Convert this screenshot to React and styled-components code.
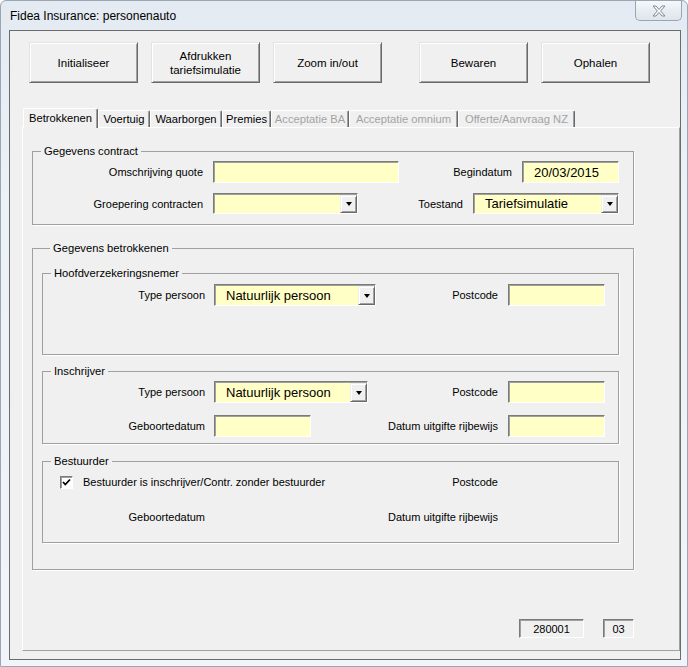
import React from "react";
import styled, { createGlobalStyle } from "styled-components";

const GlobalStyle = createGlobalStyle`
  html, body { margin: 0; padding: 0; background: #fff; }
  body {
    font-family: "Liberation Sans", Arial, sans-serif;
    font-size: 11px;
    color: #000;
  }
  * { box-sizing: border-box; }
`;

const Window = styled.div`
  width: 688px;
  height: 667px;
  display: flex;
  flex-direction: column;
  background: linear-gradient(180deg, #e3eaf2 0%, #edf2f7 30%, #f1f4f8 100%);
  border: 1px solid #9ba6b2;
  border-radius: 6px 6px 0 0;
  overflow: hidden;
`;

const TitleBar = styled.div`
  height: 29px;
  display: flex;
  align-items: flex-start;
  padding-left: 9px;
`;

const Title = styled.span`
  margin-top: 8px;
  font-size: 12px;
  color: #000;
`;

const CloseButton = styled.div`
  margin-left: auto;
  margin-right: 5px;
  width: 47px;
  height: 20px;
  border: 1px solid #9aa5b1;
  border-top: none;
  border-radius: 0 0 5px 5px;
  background: linear-gradient(180deg, #f7f9fb 0%, #e8edf2 50%, #dfe5ec 100%);
  display: flex;
  align-items: center;
  justify-content: center;
`;

const Client = styled.div`
  flex: 1;
  margin: 0 6px 6px 8px;
  border: 1px solid #6b6b6b;
  background: #f0f0f0;
  display: flex;
  flex-direction: column;
  padding: 11px 0 8px 0;
`;

const ButtonRow = styled.div`
  display: flex;
  padding-left: 19px;
`;

const Button = styled.button`
  width: 109px;
  height: 41px;
  margin-left: ${(p) => p.$gap || 0}px;
  padding: 0;
  background: #f0f0f0;
  border: 1px solid;
  border-color: #e3e3e3 #696969 #696969 #e3e3e3;
  box-shadow: inset 1px 1px #fff, inset -1px -1px #a0a0a0;
  font-family: inherit;
  font-size: 11.5px;
  line-height: 14px;
  color: #000;
`;

const TabStrip = styled.div`
  margin-top: 25px;
  height: 20px;
  margin-bottom: -1px;
  display: flex;
  align-items: flex-end;
  padding-left: 13px;
  position: relative;
  z-index: 1;
`;

const Tab = styled.div`
  width: ${(p) => p.$w}px;
  height: ${(p) => (p.$active ? 20 : 17)}px;
  margin-bottom: ${(p) => (p.$active ? 0 : 1)}px;
  padding-bottom: ${(p) => (p.$active ? 2 : 0)}px;
  background: #f0f0f0;
  border-top: 1px solid #fff;
  border-left: 1px solid #fff;
  border-right: 1px solid #696969;
  box-shadow: inset -1px 0 #a0a0a0;
  border-radius: 2px 2px 0 0;
  color: ${(p) => (p.$disabled ? "#a3a3a3" : "#000")};
  display: flex;
  align-items: center;
  justify-content: center;
  white-space: nowrap;
  font-size: 11.2px;
`;

const TabPage = styled.div`
  flex: 1;
  margin-left: 12px;
  border-top: 1px solid #fff;
  border-left: 1px solid #fff;
  border-right: 1px solid #a0a0a0;
  border-bottom: 1px solid #a0a0a0;
  display: flex;
  flex-direction: column;
  padding: 17px 45px 12px 9px;
`;

const Frame = styled.fieldset`
  margin: ${(p) => p.$margin || "0"};
  padding: ${(p) => p.$pad};
  border: 1px solid #a0a0a0;
  box-shadow: 1px 1px #fff;
  min-width: 0;
`;

const Legend = styled.legend`
  margin-left: 8px;
  padding: 0 3px;
  line-height: 13px;
  font-size: 11.2px;
`;

const FrameStack = styled.div`
  display: flex;
  flex-direction: column;
  gap: 10px;
`;

const FormGrid = styled.div`
  display: grid;
  grid-template-columns: ${(p) => p.$label}px 1fr auto;
  column-gap: ${(p) => p.$gap}px;
  row-gap: ${(p) => p.$rowGap || 0}px;
  align-items: center;
`;

const Label = styled.span`
  text-align: right;
  white-space: nowrap;
`;

const Pair = styled.div`
  grid-column: 3;
  justify-self: end;
  display: flex;
  align-items: center;
  gap: 10px;
`;

const TextBox = styled.div`
  width: ${(p) => p.$w}px;
  height: ${(p) => p.$h || 22}px;
  background: #ffffc6;
  border: 1px solid;
  border-color: #7a7a7a #fff #fff #7a7a7a;
  box-shadow: inset 1px 1px #a0a0a0;
  padding-left: 11px;
  display: flex;
  align-items: center;
  font-size: 13px;
  white-space: nowrap;
`;

const DropButton = styled.div`
  align-self: stretch;
  width: 17px;
  margin: 1px 0 0 auto;
  background: #f0f0f0;
  border: 1px solid;
  border-color: #f0f0f0 #696969 #696969 #f0f0f0;
  box-shadow: inset 1px 1px #fff, inset -1px -1px #a0a0a0;
  display: flex;
  align-items: center;
  justify-content: center;
  &::after {
    content: "";
    border-left: 3.5px solid transparent;
    border-right: 3.5px solid transparent;
    border-top: 4px solid #000;
  }
`;

const Blank = styled.div`
  width: 97px;
  height: 22px;
`;

const CheckRow = styled.div`
  grid-column: 1 / 3;
  display: flex;
  align-items: center;
  gap: 10px;
  padding-left: 17px;
`;

const CheckBox = styled.div`
  width: 13px;
  height: 13px;
  background: #fff;
  border: 1px solid;
  border-color: #7a7a7a #fff #fff #7a7a7a;
  box-shadow: inset 1px 1px #a0a0a0;
  display: flex;
  align-items: center;
  justify-content: center;
`;

const Footer = styled.div`
  margin-top: auto;
  display: flex;
  justify-content: flex-end;
  gap: 19px;
`;

const StatusBox = styled.div`
  width: ${(p) => p.$w}px;
  height: 19px;
  border: 1px solid;
  border-color: #7a7a7a #fff #fff #7a7a7a;
  box-shadow: inset 1px 1px #a0a0a0;
  display: flex;
  align-items: center;
  justify-content: center;
`;

const Combo = ({ w, h, value }) => (
  <TextBox $w={w} $h={h}>
    {value}
    <DropButton />
  </TextBox>
);

const tabs = [
  { label: "Betrokkenen", w: 75, active: true },
  { label: "Voertuig", w: 52 },
  { label: "Waarborgen", w: 72 },
  { label: "Premies", w: 49 },
  { label: "Acceptatie BA", w: 78, disabled: true },
  { label: "Acceptatie omnium", w: 109, disabled: true },
  { label: "Offerte/Aanvraag NZ", w: 117, disabled: true },
];

export default function App() {
  return (
    <>
      <GlobalStyle />
      <Window>
        <TitleBar>
          <Title>Fidea Insurance: personenauto</Title>
          <CloseButton>
            <svg width="14" height="12" viewBox="0 0 14 12">
              <polygon
                points="1,1 4,1 7,4.5 10,1 13,1 8.6,6 13,11 10,11 7,7.5 4,11 1,11 5.4,6"
                fill="#fbfcfd"
                stroke="#7d8894"
                strokeWidth="1"
                strokeLinejoin="round"
              />
            </svg>
          </CloseButton>
        </TitleBar>
        <Client>
          <ButtonRow>
            <Button>Initialiseer</Button>
            <Button $gap={13}>
              Afdrukken
              <br />
              tariefsimulatie
            </Button>
            <Button $gap={13}>Zoom in/out</Button>
            <Button $gap={37}>Bewaren</Button>
            <Button $gap={13}>Ophalen</Button>
          </ButtonRow>

          <TabStrip>
            {tabs.map((t) => (
              <Tab key={t.label} $w={t.w} $active={t.active} $disabled={t.disabled}>
                {t.label}
              </Tab>
            ))}
          </TabStrip>

          <TabPage>
            <Frame $pad="3px 14px 10px 0">
              <Legend>Gegevens contract</Legend>
              <FormGrid $label={170} $gap={10} $rowGap={10}>
                <Label>Omschrijving quote</Label>
                <TextBox $w={186} />
                <Pair>
                  <Label>Begindatum</Label>
                  <TextBox $w={97}>20/03/2015</TextBox>
                </Pair>
                <Label>Groepering contracten</Label>
                <Combo w={145} h={21} />
                <Pair>
                  <Label>Toestand</Label>
                  <Combo w={146} h={21} value="Tariefsimulatie" />
                </Pair>
              </FormGrid>
            </Frame>

            <Frame $margin="17px 0 0 0" $pad="12px 14px 26px 9px">
              <Legend>Gegevens betrokkenen</Legend>
              <FrameStack>
                <Frame $pad="4px 13px 48px 0">
                  <Legend>Hoofdverzekeringsnemer</Legend>
                  <FormGrid $label={162} $gap={9}>
                    <Label>Type persoon</Label>
                    <Combo w={162} value="Natuurlijk persoon" />
                    <Pair>
                      <Label>Postcode</Label>
                      <TextBox $w={97} />
                    </Pair>
                  </FormGrid>
                </Frame>

                <Frame $pad="3px 13px 6px 0">
                  <Legend>Inschrijver</Legend>
                  <FormGrid $label={162} $gap={9} $rowGap={12}>
                    <Label>Type persoon</Label>
                    <Combo w={154} value="Natuurlijk persoon" />
                    <Pair>
                      <Label>Postcode</Label>
                      <TextBox $w={97} />
                    </Pair>
                    <Label>Geboortedatum</Label>
                    <TextBox $w={97} />
                    <Pair>
                      <Label>Datum uitgifte rijbewijs</Label>
                      <TextBox $w={97} />
                    </Pair>
                  </FormGrid>
                </Frame>

                <Frame $margin="1px 0 0 0" $pad="3px 13px 14px 0">
                  <Legend>Bestuurder</Legend>
                  <FormGrid $label={162} $gap={9} $rowGap={13}>
                    <CheckRow>
                      <CheckBox>
                        <svg width="9" height="9" viewBox="0 0 9 9">
                          <path d="M1 4 L3.3 6.5 L8 1.5" fill="none" stroke="#000" strokeWidth="1.8" />
                        </svg>
                      </CheckBox>
                      <span>Bestuurder is inschrijver/Contr. zonder bestuurder</span>
                    </CheckRow>
                    <Pair>
                      <Label>Postcode</Label>
                      <Blank />
                    </Pair>
                    <Label>Geboortedatum</Label>
                    <span />
                    <Pair>
                      <Label>Datum uitgifte rijbewijs</Label>
                      <Blank />
                    </Pair>
                  </FormGrid>
                </Frame>
              </FrameStack>
            </Frame>

            <Footer>
              <StatusBox $w={65}>280001</StatusBox>
              <StatusBox $w={31}>03</StatusBox>
            </Footer>
          </TabPage>
        </Client>
      </Window>
    </>
  );
}
